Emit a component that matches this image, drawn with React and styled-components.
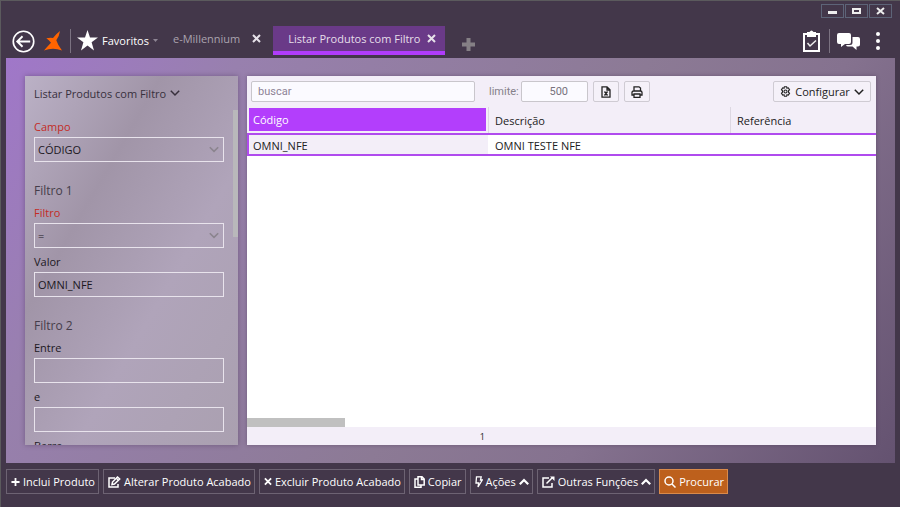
import { useState } from "react";
import styled, { createGlobalStyle } from "styled-components";

const GlobalStyle = createGlobalStyle`
  * {
    box-sizing: border-box;
  }
  body {
    margin: 0;
    background: #43374a;
    font-family: "Open Sans", "Noto Sans", sans-serif;
    font-size: 11px;
    color: #222;
  }
  button, input, select {
    font: inherit;
    color: inherit;
    margin: 0;
  }
  button {
    cursor: pointer;
  }
`;

const Window = styled.div`
  height: 100vh;
  display: flex;
  flex-direction: column;
  background: #43374a;
  border-top: 1px solid #5b5a5d;
  border-left: 1px solid #5b5a5d;
  overflow: hidden;
`;

const TitleBar = styled.div`
  display: flex;
  flex: none;
  justify-content: flex-end;
  gap: 1px;
  height: 25px;
  padding: 3px 8px 0 0;
`;

const WindowButton = styled.button`
  display: flex;
  align-items: center;
  justify-content: center;
  width: 23px;
  height: 14px;
  padding: 0;
  border: 1px solid #5d6478;
  background: transparent;
`;

const Header = styled.header`
  display: flex;
  flex: none;
  height: 32px;
  padding: 0 4px 0 10px;
`;

const IconButton = styled.button`
  display: flex;
  align-items: center;
  justify-content: center;
  width: ${(props) => props.$width}px;
  height: 30px;
  padding: 0;
  border: 0;
  background: transparent;
  color: #fff;
`;

const Divider = styled.span`
  width: 1px;
  height: 24px;
  margin: 3px 6px 0 ${(props) => props.$before}px;
  background: #7b7281;
`;

const Favorites = styled.button`
  display: flex;
  align-items: center;
  gap: 4px;
  height: 28px;
  padding: 0;
  border: 0;
  background: transparent;
  color: #fff;
`;

const Tabs = styled.nav`
  display: flex;
  margin-left: 5px;
`;

const Tab = styled.div`
  display: flex;
  align-items: center;
  height: 29px;
  padding: ${(props) => (props.$active ? "0 9px 0 15px" : "0 12px 0 10px")};
  gap: ${(props) => (props.$active ? 7 : 12)}px;
  border-bottom: 4px solid ${(props) => (props.$active ? "#b03cfb" : "transparent")};
  background: ${(props) => (props.$active ? "#6a3a88" : "transparent")};
  color: ${(props) => (props.$active ? "#e6dfea" : "#aaa3ae")};
`;

const TabLink = styled.a`
  color: inherit;
  text-decoration: none;
  white-space: nowrap;
`;

const TabClose = styled.button`
  display: flex;
  padding: 0;
  border: 0;
  background: transparent;
  color: #e6e1e9;
`;

const NewTab = styled.button`
  display: flex;
  align-items: center;
  margin-left: 17px;
  height: 36px;
  padding: 0;
  border: 0;
  background: transparent;
`;

const HeaderActions = styled.div`
  display: flex;
  margin-left: auto;
`;

const Workspace = styled.main`
  display: flex;
  flex: 1;
  min-height: 0;
  gap: 9px;
  margin: 0 5px;
  padding: 18px 19px;
  background: linear-gradient(125deg, #a077c9 0%, #9880ae 20%, #8c7a95 55%, #85728f 72%, #645270 100%);
`;

const SidePanel = styled.aside`
  display: flex;
  flex: none;
  flex-direction: column;
  width: 213px;
  background: linear-gradient(120deg, #bbb1c6 0%, #a195a8 32%, #b0a4ba 62%, #aaa0b0 100%);
  box-shadow: 0 0 5px rgba(60, 40, 70, 0.4);
`;

const PanelTitle = styled.button`
  display: flex;
  align-items: center;
  flex: none;
  gap: 4px;
  height: 34px;
  padding: 0 9px;
  border: 0;
  background: transparent;
  color: #38303d;
  font-weight: 500;
`;

const PanelBody = styled.div`
  display: flex;
  flex: 1;
  min-height: 0;
`;

const FilterForm = styled.form`
  flex: 1;
  padding: 8px 9px 0;
  overflow-y: auto;
  scrollbar-width: none;
`;

const PanelScroll = styled.div`
  width: 5px;
`;

const PanelThumb = styled.div`
  height: 38%;
  background: #b9b8bb;
`;

const SectionTitle = styled.h2`
  margin: 20px 0 4px;
  font-size: 12px;
  font-weight: 500;
  line-height: 18px;
  color: #453d4a;
`;

const Field = styled.div`
  position: relative;
  margin-bottom: 5px;
`;

const Label = styled.label`
  display: block;
  margin-bottom: 2px;
  line-height: 17px;
  color: ${(props) => (props.$required ? "#c42b25" : "#1c181f")};
`;

const controlStyle = `
  display: block;
  width: 100%;
  height: 25px;
  padding: 0 3px;
  border: 1px solid #e8e3ec;
  border-radius: 0;
  background: transparent;
  color: #1c181f;
  outline: 0;
`;

const TextBox = styled.input`
  ${controlStyle}
`;

const Select = styled.select`
  ${controlStyle}
  appearance: none;
`;

const SelectArrow = styled.svg`
  position: absolute;
  right: 5px;
  bottom: 9px;
  pointer-events: none;
`;

const GridPanel = styled.section`
  display: flex;
  flex: 1;
  flex-direction: column;
  min-width: 0;
  background: #fff;
  box-shadow: 0 0 4px rgba(60, 40, 70, 0.4);
`;

const Toolbar = styled.div`
  display: flex;
  align-items: center;
  flex: none;
  height: 31px;
  padding: 0 5px 0 4px;
  background: #f3eef8;
`;

const SearchBox = styled.input`
  width: 224px;
  height: 21px;
  padding: 0 6px;
  border: 1px solid #c9c6cc;
  border-radius: 2px;
  background: #fbfaff;
  font-family: Roboto, "Liberation Sans", sans-serif;
  font-size: 11px;

  &::placeholder {
    color: #8d8296;
  }
`;

const LimitLabel = styled.label`
  margin: 0 2px 0 14px;
  font-family: Roboto, "Liberation Sans", sans-serif;
  font-size: 11px;
  color: #85808a;
`;

const LimitBox = styled(SearchBox)`
  width: 67px;
  padding: 0 5px 0 14px;
  margin-right: 5px;
  text-align: center;
  color: #77727c;
`;

const ToolButton = styled.button`
  display: flex;
  align-items: center;
  justify-content: center;
  gap: 4px;
  min-width: 26px;
  height: 21px;
  margin-right: 5px;
  padding: 0 5px;
  border: 1px solid #cfcbd3;
  border-radius: 2px;
  background: #f5f1f9;
`;

const ConfigButton = styled(ToolButton)`
  width: 98px;
  margin: 0 0 0 auto;
`;

const Table = styled.table`
  width: 100%;
  table-layout: fixed;
  border-collapse: separate;
  border-spacing: 0;
`;

const HeadRow = styled.tr`
  height: 26px;
  background: #f3eef8;
`;

const HeadCell = styled.th`
  width: ${(props) => props.$width};
  padding: 0 0 0 6px;
  border-left: 1px solid #ddd8e2;
  font-weight: 400;
  text-align: left;

  &:first-child {
    border: 2px solid #f3eef8;
    border-top-width: 1px;
    padding: 0 4px;
    background: #b33efc;
    background-clip: padding-box;
    color: #fff;
  }
`;

const SelectedRow = styled.tr`
  height: 23px;
`;

const Cell = styled.td`
  padding: 1px 0 0 7px;
  border: solid #b04bee;
  border-width: 2px 0;

  &:first-child {
    padding-left: 4px;
    border-left-width: 2px;
    background: #f3eef8;
  }
`;

const ScrollTrack = styled.div`
  margin-top: auto;
  height: 9px;
`;

const ScrollThumb = styled.div`
  width: 98px;
  height: 9px;
  background: #c0c0c0;
`;

const GridFooter = styled.div`
  display: flex;
  flex: none;
  align-items: center;
  height: 18px;
  background: #f3eef8;
  font-size: 9px;
`;

const RowCount = styled.span`
  width: 38%;
  padding-right: 1px;
  text-align: right;
`;

const ActionBar = styled.footer`
  display: flex;
  flex: none;
  gap: 4px;
  height: 44px;
  padding: 6px 5px 0;
`;

const ActionButton = styled.button`
  display: flex;
  align-items: center;
  gap: 3px;
  height: 25px;
  padding: 0 3px 0 4px;
  border: 1px solid ${(props) => (props.$primary ? "#d98a4b" : "#6d6373")};
  background: ${(props) => (props.$primary ? "#bd601c" : "transparent")};
  color: #fff;
  white-space: nowrap;
`;

function Icon({ width = 12, height = 12, box = "0 0 12 12", stroke = 1.5, children }) {
  return (
    <svg
      width={width}
      height={height}
      viewBox={box}
      fill="none"
      stroke="currentColor"
      strokeWidth={stroke}
      aria-hidden="true"
    >
      {children}
    </svg>
  );
}

const Chevron = ({ up }) => (
  <Icon width={10} height={10} box="0 0 10 10" stroke={up ? 2.2 : 1.5}>
    <path d={up ? "M.8 7.2 5 3l4.200 4.200" : "M.8 2.800 5 7l4.200-4.200"} />
  </Icon>
);

const Close = () => (
  <Icon width={9} height={9} box="0 0 9 9" stroke={2}>
    <path d="m1 1 7 7M8 1 1 8" />
  </Icon>
);

const actions = [
  { text: "Inclui Produto", icon: <Icon width={9} height={10} box="0 0 10 10" stroke={2}><path d="M5 .5v9M.5 5h9" /></Icon> },
  {
    text: "Alterar Produto Acabado",
    icon: (
      <Icon width={13} box="0 0 13 12">
        <path d="M7 2H1v9h9V8" />
        <path d="M4 8.500 4.500 6l5-5 2.200 2-5.200 5z" />
        <path d="m8.300 2.300 2.200 2" />
      </Icon>
    ),
  },
  { text: "Excluir Produto Acabado", icon: <Icon width={8} height={9} box="0 0 9 9" stroke={2}><path d="m1 1 7 7M8 1 1 8" /></Icon> },
  {
    text: "Copiar",
    icon: (
      <Icon width={11} box="0 0 11 12">
        <path d="M4 .8h4l2.200 2.200v6H4zM7.500 1v2.500H10M3.500 3H1v8.200h6V9" />
      </Icon>
    ),
  },
  {
    text: "Ações",
    menu: true,
    icon: (
      <Icon width={8} box="0 0 8 12" stroke={1.3}>
        <path d="M1.500.8h4.700L5.500 4h1.800L3 11l.7-4H1z" />
      </Icon>
    ),
  },
  {
    text: "Outras Funções",
    menu: true,
    icon: (
      <Icon width={13} box="0 0 13 12">
        <path d="M7 2H1v9h9V7M4.500 7.500l6-6" />
        <path d="M8 .5h4.500V5z" fill="currentColor" stroke="none" />
      </Icon>
    ),
  },
  {
    text: "Procurar",
    primary: true,
    icon: (
      <Icon>
        <circle cx="5" cy="5" r="4" />
        <path d="m8 8 3.500 3.500" />
      </Icon>
    ),
  },
];

function FilterSelect({ id, label, value }) {
  return (
    <Field>
      <Label htmlFor={id} $required>{label}</Label>
      <Select id={id} defaultValue={value}>
        <option>{value}</option>
      </Select>
      <SelectArrow width="10" height="7" viewBox="0 0 10 7" fill="none" stroke="#8b848e" strokeWidth="1.600">
        <path d="m.8 1.200 4.200 4.200 4.200-4.200" />
      </SelectArrow>
    </Field>
  );
}

function FilterInput({ id, label, value = "" }) {
  return (
    <Field>
      <Label htmlFor={id}>{label}</Label>
      <TextBox id={id} defaultValue={value} />
    </Field>
  );
}

function TopBar() {
  return (
    <>
      <TitleBar>
        <WindowButton aria-label="Minimizar">
          <svg width="9" height="8"><path d="M0 4h9v3H0z" fill="#eee" /></svg>
        </WindowButton>
        <WindowButton aria-label="Maximizar">
          <svg width="9" height="8"><path d="M1 2h7v4H1z" fill="none" stroke="#eee" strokeWidth="2" /></svg>
        </WindowButton>
        <WindowButton aria-label="Fechar">
          <svg width="9" height="8"><path d="m1 1 7 6M8 1 1 7" stroke="#eee" strokeWidth="2" /></svg>
        </WindowButton>
      </TitleBar>
      <Header>
        <IconButton $width={25} aria-label="Voltar">
          <Icon width={23} height={23} box="0 0 24 24" stroke={1.7}>
            <circle cx="12" cy="12" r="10.700" />
            <path d="M19 12H6M11 6.500 5.500 12l5.500 5.500" stroke="#fff" strokeWidth="2" />
          </Icon>
        </IconButton>
        <IconButton $width={34} aria-label="Millennium">
          <svg width="18" height="20" viewBox="0 0 18 20">
            <path
              d="M16 0Q15.500 4.500 12.300 9.200 14 14.500 18 19.500 9 16 0 19.500 2.500 16.500 7 11.800 5 8.800 2.300 7.300 6 6.500 9 7 12 3 16 0z"
              fill="#ff6400"
            />
          </svg>
        </IconButton>
        <Divider $before={0} />
        <Favorites>
          <svg width="21" height="21" viewBox="0 0 21 21">
            <path d="m10.500 0 2.500 7.500h8l-6.400 4.800L17 20.500l-6.500-5-6.500 5 2.400-8.200L0 7.500h8z" fill="#fff" />
          </svg>
          Favoritos
          <svg width="5" height="3"><path d="M0 0h5L2.500 3z" fill="#8e8594" /></svg>
        </Favorites>
        <Tabs>
          <Tab>
            <TabLink href="#millennium">e-Millennium</TabLink>
            <TabClose aria-label="Fechar e-Millennium"><Close /></TabClose>
          </Tab>
          <Tab $active>
            <TabLink href="#produtos">Listar Produtos com Filtro</TabLink>
            <TabClose aria-label="Fechar Listar Produtos com Filtro"><Close /></TabClose>
          </Tab>
        </Tabs>
        <NewTab aria-label="Nova aba">
          <svg width="13" height="13"><path d="M6.500 0v13M0 6.500h13" stroke="#858085" strokeWidth="4" /></svg>
        </NewTab>
        <HeaderActions>
          <IconButton $width={18} aria-label="Tarefas">
            <Icon width={17} height={22} box="0 0 17 22" stroke={2}>
              <path d="M1 4h15v17H1z" />
              <path d="M4 2h2.500Q8.500-1 10.500 2H13v5H4z" fill="#fff" stroke="none" />
              <path d="m4.500 13 2.500 3 6-5.500" stroke="#eee" strokeWidth="1.500" />
            </Icon>
          </IconButton>
          <Divider $before={9} />
          <IconButton $width={24} aria-label="Mensagens">
            <svg width="23" height="17" viewBox="0 0 23 17">
              <path d="M2 0h10q2 0 2 2v7q0 2-2 2H8l-4 3v-3H2q-2 0-2-2V2q0-2 2-2z" fill="#fff" />
              <path d="M15.500 4H21q2 0 2 2v5.500q0 2-2 2h-1.500V17l-4-3.500H11q-1.500 0-2-1.500h4q2.500 0 2.500-2.500z" fill="#fff" />
            </svg>
          </IconButton>
          <IconButton $width={36} aria-label="Mais opções">
            <svg width="4" height="18" viewBox="0 0 4 18" fill="#fff">
              <circle cx="2" cy="2" r="2" />
              <circle cx="2" cy="9" r="2" />
              <circle cx="2" cy="16" r="2" />
            </svg>
          </IconButton>
        </HeaderActions>
      </Header>
    </>
  );
}

function Filters() {
  return (
    <SidePanel>
      <PanelTitle>
        Listar Produtos com Filtro
        <Chevron />
      </PanelTitle>
      <PanelBody>
        <FilterForm>
          <FilterSelect id="campo" label="Campo" value="CÓDIGO" />
          <SectionTitle>Filtro 1</SectionTitle>
          <FilterSelect id="filtro" label="Filtro" value="=" />
          <FilterInput id="valor" label="Valor" value="OMNI_NFE" />
          <SectionTitle>Filtro 2</SectionTitle>
          <FilterInput id="entre" label="Entre" />
          <FilterInput id="e" label="e" />
          <FilterInput id="barra" label="Barra" />
        </FilterForm>
        <PanelScroll>
          <PanelThumb />
        </PanelScroll>
      </PanelBody>
    </SidePanel>
  );
}

function ProductGrid() {
  const [search, setSearch] = useState("");
  return (
    <GridPanel>
      <Toolbar>
        <SearchBox
          aria-label="buscar"
          placeholder="buscar"
          value={search}
          onChange={(e) => setSearch(e.target.value)}
        />
        <LimitLabel htmlFor="limite">limite:</LimitLabel>
        <LimitBox id="limite" defaultValue="500" />
        <ToolButton aria-label="Exportar">
          <Icon width={10} box="0 0 10 12" stroke={1.3}>
            <path d="M1 .8h5l3 3v7.400H1zM6 1v3h3M3.500 5.500l3 4M6.500 5.500l-3 4" />
          </Icon>
        </ToolButton>
        <ToolButton aria-label="Imprimir">
          <Icon stroke={1.3}>
            <path d="M3 5V.8h5L9.500 2v3M3 9H1V6.500Q1 5 2.500 5h7Q11 5 11 6.500V9H9M3 8h6v3.300H3z" />
          </Icon>
        </ToolButton>
        <ConfigButton>
          <Icon width={11} height={11} stroke={1.2}>
            <path d="M4.800.8h2.400l.4 1.600 1.500-.4 1.300 2L9.300 5.200v1.600l1.100 1.200-1.300 2-1.500-.4-.4 1.600H4.800l-.4-1.600-1.500.4-1.300-2 1.100-1.200V5.200L1.600 4l1.300-2 1.500.4z" />
            <circle cx="6" cy="6" r="1.700" />
          </Icon>
          Configurar
          <Chevron />
        </ConfigButton>
      </Toolbar>
      <Table>
        <thead>
          <HeadRow>
            <HeadCell $width="241px">Código</HeadCell>
            <HeadCell $width="242px">Descrição</HeadCell>
            <HeadCell>Referência</HeadCell>
          </HeadRow>
        </thead>
        <tbody>
          <SelectedRow>
            <Cell>OMNI_NFE</Cell>
            <Cell>OMNI TESTE NFE</Cell>
            <Cell />
          </SelectedRow>
        </tbody>
      </Table>
      <ScrollTrack>
        <ScrollThumb />
      </ScrollTrack>
      <GridFooter>
        <RowCount>1</RowCount>
      </GridFooter>
    </GridPanel>
  );
}

function App() {
  return (
    <Window>
      <GlobalStyle />
      <TopBar />
      <Workspace>
        <Filters />
        <ProductGrid />
      </Workspace>
      <ActionBar>
        {actions.map((action) => (
          <ActionButton key={action.text} $primary={action.primary}>
            {action.icon}
            {action.text}
            {action.menu && <Chevron up />}
          </ActionButton>
        ))}
      </ActionBar>
    </Window>
  );
}

export default App;
